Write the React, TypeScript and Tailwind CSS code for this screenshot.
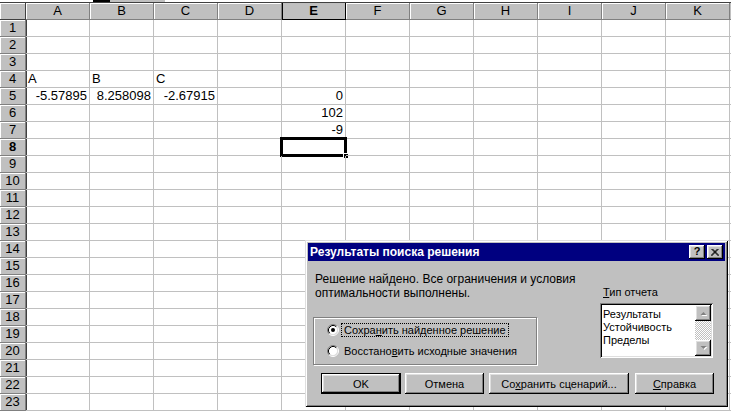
import React from "react";

const COLS = ["A", "B", "C", "D", "E", "F", "G", "H", "I", "J", "K"];

type CellVal = { t: string; align: "l" | "r" };
const DATA: Record<string, CellVal> = {
  "4A": { t: "A", align: "l" },
  "4B": { t: "B", align: "l" },
  "4C": { t: "C", align: "l" },
  "5A": { t: "-5.57895", align: "r" },
  "5B": { t: "8.258098", align: "r" },
  "5C": { t: "-2.67915", align: "r" },
  "5E": { t: "0", align: "r" },
  "6E": { t: "102", align: "r" },
  "7E": { t: "-9", align: "r" },
};

const raised =
  "shadow-[inset_-1px_-1px_0_#000,inset_1px_1px_0_#fff,inset_-2px_-2px_0_#808080,inset_2px_2px_0_#dfdfdf]";
const sunken =
  "shadow-[inset_1px_1px_0_#808080,inset_-1px_-1px_0_#fff,inset_2px_2px_0_#000,inset_-2px_-2px_0_#dfdfdf]";

function Radio({ checked }: { checked: boolean }) {
  return (
    <svg width="12" height="12" viewBox="0 0 12 12" className="shrink-0">
      <circle cx="6" cy="6" r="4.5" fill="#fff" />
      <path d="M2.11 9.89 A5.5 5.5 0 0 1 9.89 2.11" stroke="#808080" fill="none" />
      <path d="M9.89 2.11 A5.5 5.5 0 0 1 2.11 9.89" stroke="#fff" fill="none" />
      <path d="M2.82 9.18 A4.5 4.5 0 0 1 9.18 2.82" stroke="#000" fill="none" />
      <path d="M9.18 2.82 A4.5 4.5 0 0 1 2.82 9.18" stroke="#dfdfdf" fill="none" />
      {checked && <circle cx="6" cy="6" r="2" fill="#000" />}
    </svg>
  );
}

function ScrollBtn({ dir }: { dir: "up" | "down" }) {
  return (
    <div className={`w-[16px] h-[16px] bg-[#c0c0c0] ${raised} flex items-center justify-center`}>
      <svg width="9" height="6" viewBox="0 0 9 6">
        {dir === "up" ? (
          <>
            <path d="M1.5 5 L4.5 2 L7.5 5 Z" fill="#fff" transform="translate(1,1)" />
            <path d="M1.5 5 L4.5 2 L7.5 5 Z" fill="#808080" />
          </>
        ) : (
          <>
            <path d="M1.5 1 L4.5 4 L7.5 1 Z" fill="#fff" transform="translate(1,1)" />
            <path d="M1.5 1 L4.5 4 L7.5 1 Z" fill="#808080" />
          </>
        )}
      </svg>
    </div>
  );
}

function Btn({ w, children, def }: { w: string; children: React.ReactNode; def?: boolean }) {
  return (
    <div
      className={`${w} h-[21px] bg-[#c0c0c0] flex items-center justify-center text-[11px] ${
        def
          ? "shadow-[inset_0_0_0_1px_#000,inset_-2px_-2px_0_#000,inset_2px_2px_0_#fff,inset_-3px_-3px_0_#808080,inset_3px_3px_0_#dfdfdf]"
          : raised
      }`}
    >
      {children}
    </div>
  );
}

function Dialog() {
  return (
    <div
      className="absolute left-[305px] top-[240px] w-[423px] h-[167px] bg-[#c0c0c0] p-[3px] flex flex-col shadow-[inset_1px_1px_0_#dfdfdf,inset_-1px_-1px_0_#000,inset_2px_2px_0_#fff,inset_-2px_-2px_0_#808080] text-[12px] leading-[14px] text-black"
      style={{ fontFamily: '"Liberation Sans", Arial, sans-serif' }}
    >
      <div className="h-[18px] bg-[#000080] flex items-center pl-[2px] pr-[2px]">
        <span className="text-white font-bold text-[12px]">Результаты поиска решения</span>
        <div className="ml-auto flex gap-[2px]">
          <div className={`w-[16px] h-[14px] bg-[#c0c0c0] ${raised} flex items-center justify-center`}>
            <span className="font-bold text-[11px] leading-[11px] -mt-[1px]">?</span>
          </div>
          <div className={`w-[16px] h-[14px] bg-[#c0c0c0] ${raised} flex items-center justify-center`}>
            <svg width="8" height="7" viewBox="0 0 8 7">
              <path d="M0.5 0 L7.5 7 M1.5 0 L8 6.5 M7.5 0 L0.5 7 M6.5 0 L0 6.5" stroke="#000" strokeWidth="1" />
            </svg>
          </div>
        </div>
      </div>
      <div className="flex">
        <div className="w-[292px] flex flex-col">
          <div className="mt-[11px] ml-[7px]">
            Решение найдено. Все ограничения и условия
            <br />
            оптимальности выполнены.
          </div>
          <div className="mt-[17px] ml-[5px] w-[224px] h-[48px] border border-[#808080] shadow-[1px_1px_0_#fff,inset_1px_1px_0_#fff] flex flex-col pl-[13px] pt-[5px] gap-[8px] text-[11px]">
            <div className="flex items-center gap-[2px]">
              <Radio checked />
              <span className="border border-dotted border-black px-[2px] leading-[12px]">
                Сохра<span className="underline">н</span>ить найденное решение
              </span>
            </div>
            <div className="flex items-center gap-[3px]">
              <Radio checked={false} />
              <span className="px-[2px] leading-[12px]">
                Восстано<span className="underline">в</span>ить исходные значения
              </span>
            </div>
          </div>
        </div>
        <div className="flex flex-col text-[11px]">
          <div className="mt-[24px] ml-[3px]">
            <span className="underline">Т</span>ип отчета
          </div>
          <div className={`mt-[4px] w-[113px] h-[55px] bg-white ${sunken} p-[2px] flex`}>
            <div className="flex-1 flex flex-col pl-[1px] pt-[3px] leading-[13px]">
              <span>Результаты</span>
              <span>Устойчивость</span>
              <span>Пределы</span>
            </div>
            <div className="w-[16px] flex flex-col">
              <ScrollBtn dir="up" />
              <div className="flex-1 bg-[image:repeating-conic-gradient(#c0c0c0_0%_25%,#ffffff_0%_50%)] bg-[length:2px_2px]" />
              <ScrollBtn dir="down" />
            </div>
          </div>
        </div>
      </div>
      <div className="mt-[8px] ml-[13px] flex">
        <Btn w="w-[80px]" def>
          OK
        </Btn>
        <div className="w-[4px]" />
        <Btn w="w-[79px]">Отмена</Btn>
        <div className="w-[5px]" />
        <Btn w="w-[140px]">
          Со<span className="underline">х</span>ранить сценарий...
        </Btn>
        <div className="w-[6px]" />
        <Btn w="w-[79px]">
          <span className="underline">С</span>правка
        </Btn>
      </div>
    </div>
  );
}

export default function App() {
  const rows = Array.from({ length: 23 }, (_, i) => i + 1);
  return (
    <div
      className="relative w-[731px] h-[411px] overflow-hidden bg-white text-black"
      style={{ fontFamily: '"Liberation Sans", Arial, sans-serif' }}
    >
      {/* top strip */}
      <div className="h-[2px] flex">
        <div className="w-[93px] bg-white" />
        <div className="w-[17px] bg-black" />
        <div className="w-[55px] bg-[#c0c0c0]" />
        <div className="flex-1 bg-white" />
      </div>
      <div className="h-[1px] bg-[#404040]" />
      {/* column header */}
      <div className="flex h-[17px]">
        <div className="w-[26px] h-full bg-[#c0c0c0] border-r border-b border-[#404040] shadow-[inset_1px_1px_0_#fff]" />
        {COLS.map((c) => (
          <div
            key={c}
            className={`w-[64px] shrink-0 h-full bg-[#c0c0c0] border-r border-b flex items-center justify-center text-[13px] leading-[16px] ${
              c === "E"
                ? "font-bold border-[#000] shadow-[inset_1px_0_0_#000]"
                : "border-[#808080] shadow-[inset_1px_1px_0_#fff]"
            }`}
          >
            {c}
          </div>
        ))}
        <div className="flex-1 h-full bg-[#c0c0c0] border-b border-[#808080]" />
      </div>
      {rows.map((r) => (
        <div key={r} className="flex h-[17px]">
          <div
            className={`w-[26px] h-full bg-[#c0c0c0] border-r border-b border-[#808080] shadow-[inset_1px_1px_0_#fff,1px_0_0_#404040] flex items-center justify-center text-[13px] leading-[16px] ${
              r === 8 ? "font-bold" : ""
            }`}
          >
            {r}
          </div>
          {COLS.map((c) => {
            const v = DATA[`${r}${c}`];
            const sel = r === 8 && c === "E";
            return (
              <div
                key={c}
                className={`relative w-[64px] shrink-0 h-full border-r border-b border-[#c0c0c0] flex items-end px-[2px] text-[13px] leading-[16px] ${
                  v && v.align === "r" ? "justify-end" : "justify-start"
                }`}
              >
                {v ? v.t : null}
                {sel && (
                  <>
                    <div className="absolute left-[-2px] top-[-2px] w-[67px] h-[20px] border-[3px] border-black" />
                    <div className="absolute right-[-4px] bottom-[-4px] w-[6px] h-[6px] bg-black border border-white" />
                  </>
                )}
              </div>
            );
          })}
          <div className="flex-1 h-full border-b border-[#c0c0c0]" />
        </div>
      ))}
      <Dialog />
    </div>
  );
}
